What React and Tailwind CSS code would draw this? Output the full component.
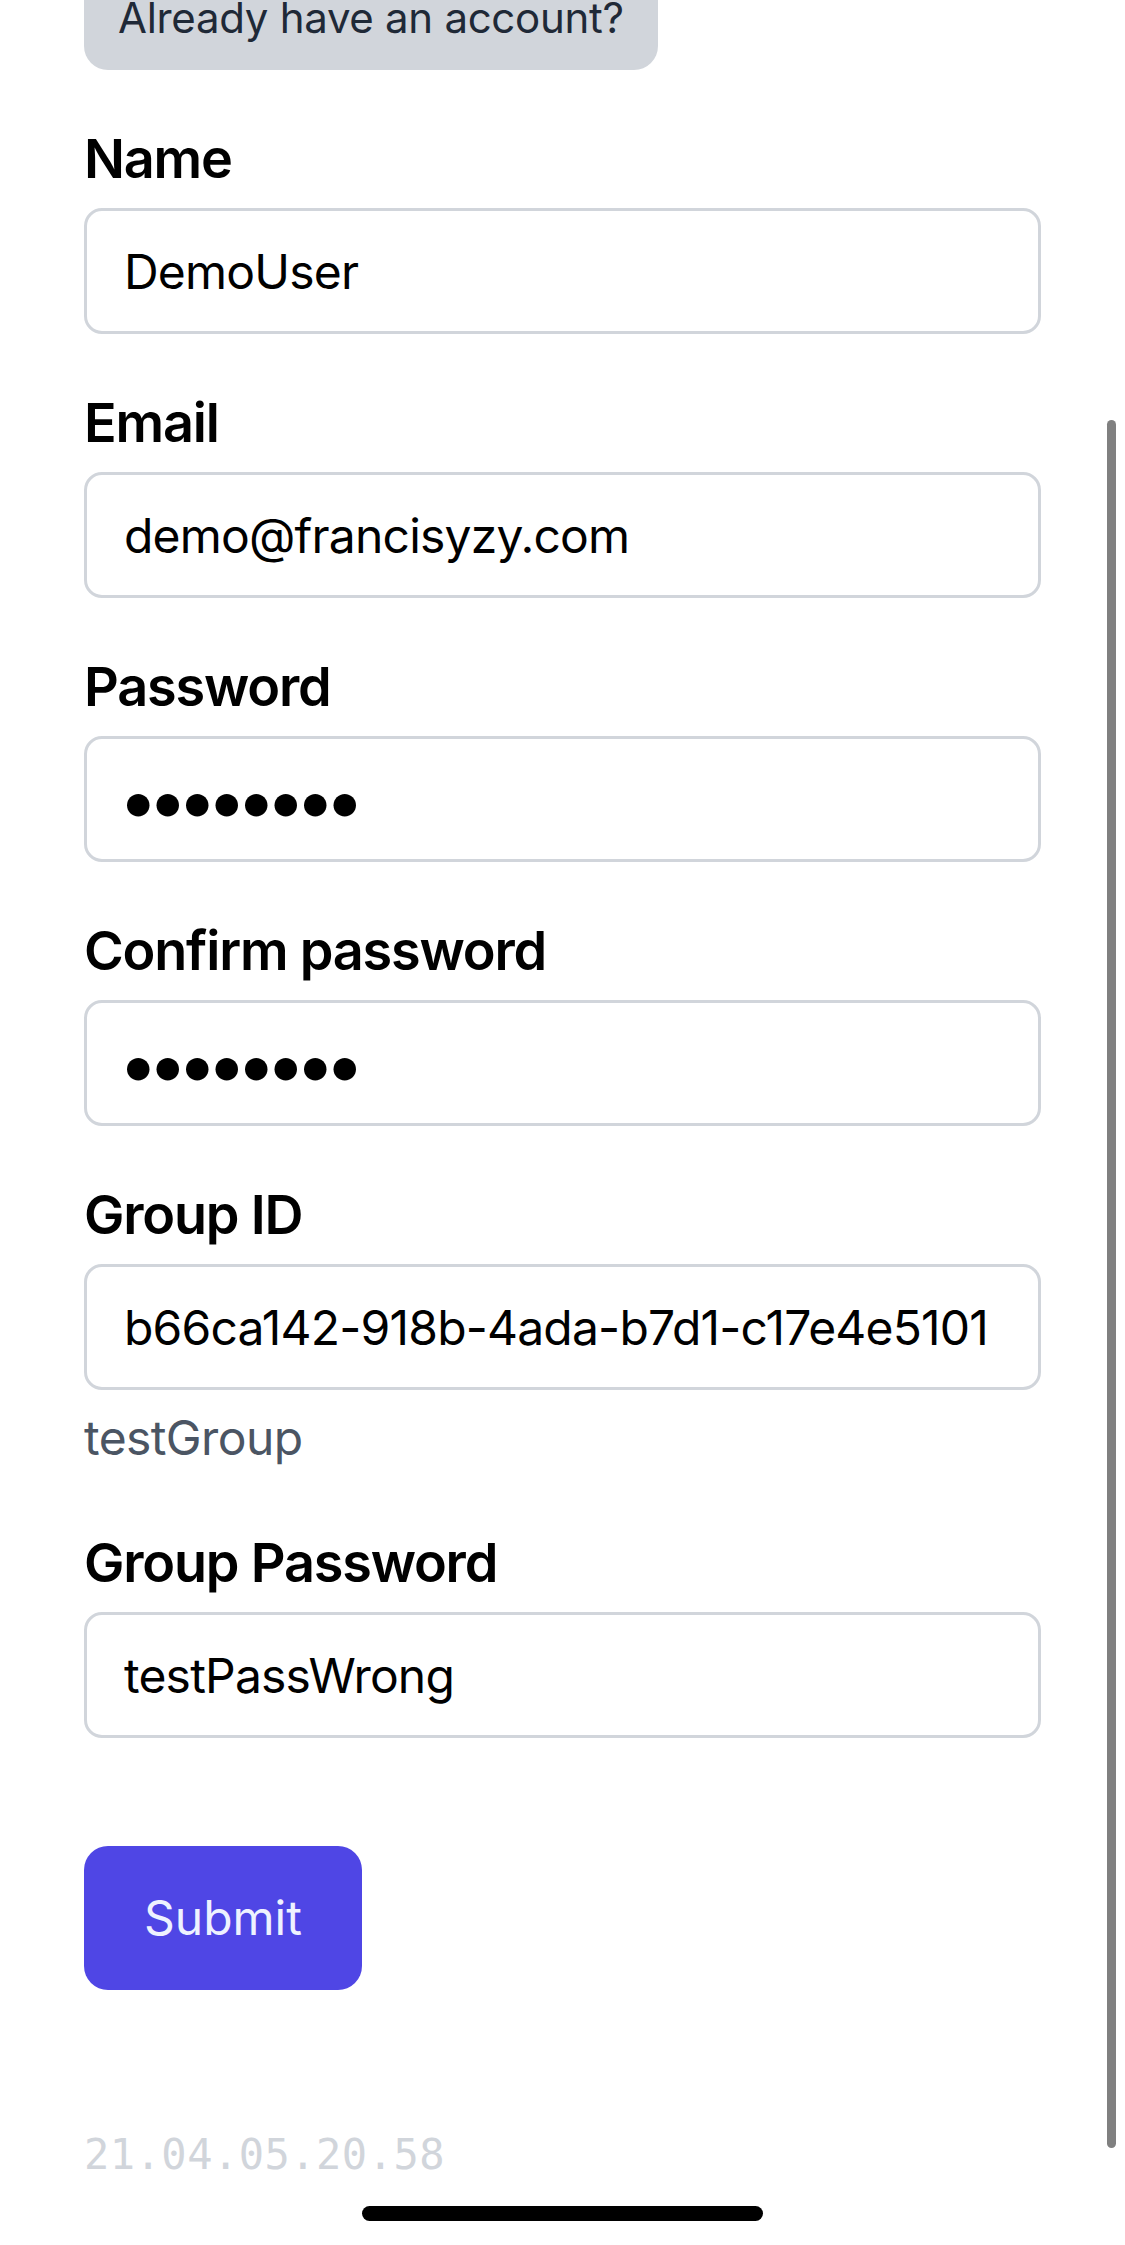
const fields = [
  { label: "Name", type: "text", value: "DemoUser" },
  { label: "Email", type: "email", value: "demo@francisyzy.com" },
  { label: "Password", type: "password", value: "password" },
  { label: "Confirm password", type: "password", value: "password" },
  { label: "Group ID", type: "text", value: "b66ca142-918b-4ada-b7d1-c17e4e5101", hint: "testGroup" },
  { label: "Group Password", type: "text", value: "testPassWrong" },
];

function Field({ label, type, value, hint }) {
  const isPass = type === "password";
  return (
    <div className="flex flex-col">
      <label className="text-[54px] leading-[84px] font-semibold tracking-[-1.2px] text-black">{label}</label>
      <input
        type={type}
        value={value}
        readOnly
        className={
          isPass
            ? "mt-[7px] h-[126px] w-full rounded-[18px] border-[3px] border-[#d1d5db] bg-white px-[31px] text-[72px] tracking-[-11px] text-black outline-none"
            : "mt-[7px] h-[126px] w-full rounded-[18px] border-[3px] border-[#d1d5db] bg-white px-[37px] text-[48px] tracking-[-0.8px] text-black outline-none"
        }
      />
      {hint && <p className="mt-[12px] text-[48px] leading-[72px] tracking-[-0.6px] text-[#4b5563]">{hint}</p>}
    </div>
  );
}

export default function App() {
  return (
    <div
      className="relative min-h-[2245px] overflow-hidden bg-white px-[84px]"
      style={{ fontFamily: "Inter, 'Noto Sans', sans-serif" }}
    >
      <button className="rounded-b-[24px] bg-[#d1d5db] px-[34px] pb-[34px] pt-0 text-[42px] leading-[36px] tracking-[-0.3px] text-[#1f2937]">
        Already have an account?
      </button>

      <form className="mt-[47px] flex flex-col gap-[47px]">
        {fields.map((f) => (
          <Field key={f.label} {...f} />
        ))}
      </form>

      <button className="mt-[108px] rounded-[24px] bg-[#4f46e5] px-[60px] py-[36px] text-[48px] leading-[72px] text-[#eef2ff]">
        Submit
      </button>

      <p
        className="mt-[135px] text-[42px] leading-[60px] tracking-[0.5px] text-[#d1d5db] slashed-zero"
        style={{ fontFamily: "'DejaVu Sans Mono', 'Liberation Mono', monospace" }}
      >
        21.04.05.20.58
      </p>

      {/* scrollbar + home indicator overlays */}
      <div className="absolute right-[9px] top-[420px] h-[1728px] w-[9px] rounded-full bg-[#808080]" />
      <div className="absolute bottom-[24px] left-[362px] h-[15px] w-[401px] rounded-full bg-black" />
    </div>
  );
}
